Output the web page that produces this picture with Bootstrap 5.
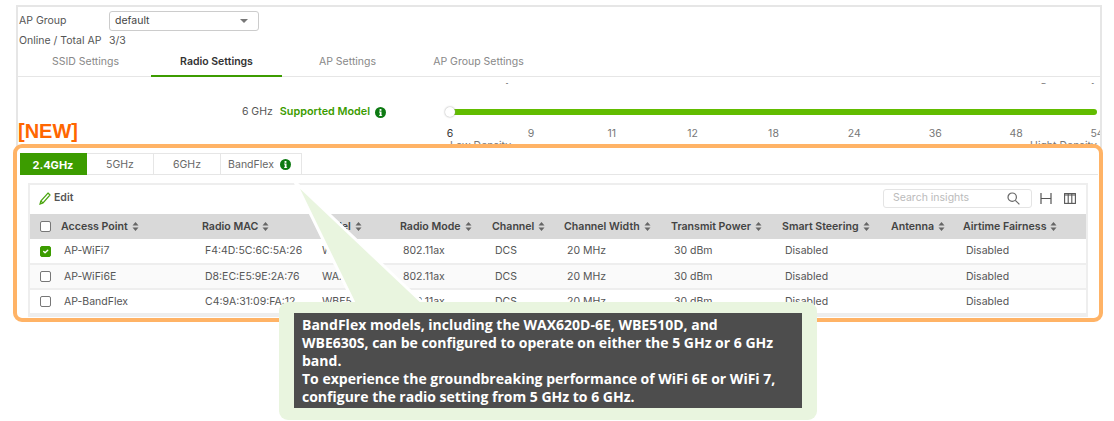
<!DOCTYPE html>
<html lang="en">
<head>
    <meta charset="UTF-8">
    <title>Radio Settings</title>
    <link href="https://cdn.jsdelivr.net/npm/bootstrap@5.3.0/dist/css/bootstrap.min.css" rel="stylesheet">
    <style>
        html, body { height: 421px; overflow: hidden; }
        body { position: relative; background: #fff; font-family: Inter, "Liberation Sans", sans-serif; font-size: 10.5px; color: #555; line-height: 14px; }

        .top-panel { margin: 5px 12px 0 16px; border: solid #e6e6e6; border-width: 2px 2px 0 2px; padding: 4px 0 0 0; overflow: hidden; }
        .info-row { height: 20px; padding-left: 1px; }
        .info-label { width: 90px; flex: none; }
        .fake-select { width: 150px; height: 20px; border: 1px solid #ccc; border-radius: 3px; padding: 0 10px 0 5px; color: #444; }
        .caret { width: 0; height: 0; border: 4px solid transparent; border-top: 4px solid #777; border-bottom: 0; }
        .page-tabs { height: 26px; border-bottom: 1px solid #e6e6e6; padding-left: 2px; }
        .page-tab { width: 131px; color: #888; height: 26px; padding-bottom: 4px; }
        .page-tab.current { color: #333; font-weight: 600; border-bottom: 2px solid #3c9c00; padding-bottom: 2px; }

        .slider-area { margin-top: 6px; }
        .cut-row { height: 3px; overflow: hidden; }
        .density-row { margin-top: -11px; padding-left: 432px; width: 1079px; color: #777; }
        .slide-row { height: 20px; margin-top: 16px; }
        .left-col { width: 432px; flex: none; }
        .right-col { width: 647px; flex: none; }
        .model-col { padding-right: 64px; }
        .supported { color: #3c9c00; font-weight: 600; margin: 0 5px 0 7px; font-size: 10.8px; }
        .track { height: 6px; background: #62bc00; border-radius: 3px; position: relative; }
        .thumb { position: absolute; left: -5px; top: -2px; width: 10px; height: 10px; background: #fff; border-radius: 50%; box-shadow: 0 0 2px #999; }
        .ticks-row { height: 14px; margin-top: 5px; color: #777; }
        .tick { width: 0; white-space: nowrap; }
        .tick.first { color: #333; }
        .new-tag { font-family: "Liberation Sans", sans-serif; font-size: 20px; font-weight: 700; color: #f60; line-height: 20px; margin-top: -6px; }
        .density-low { margin-top: -2px; color: #777; height: 14px; }

        .orange-box { position: relative; margin: -9px 0 0 13px; width: 1090px; height: 178px; border: 4px solid #ffb366; border-radius: 9px; background: #fff; padding: 5px 3px 0 3px; }
        .band-tabs { height: 22px; border-bottom: 1px solid #e6e6e6; width: 1078px; }
        .band-tab { width: 67px; height: 22px; border: solid #e6e6e6; border-width: 1px 1px 0 0; color: #666; }
        .band-tab.current { background: #3c9c00; color: #fff; font-weight: 700; font-size: 11px; border-color: #3c9c00; }
        .band-tab.wide { width: 81px; gap: 6px; border-left-width: 0; padding-right: 3px; }

        .ap-card { margin: 8px 0 0 8px; width: 1060px; border: 2px solid #eee; }
        .card-bar { height: 29px; padding: 0 10px 3px 9px; }
        .edit-link { font-weight: 600; color: #555; gap: 3px; }
        .search-box { width: 149px; height: 19px; border: 1px solid #e4e4e4; border-radius: 3px; padding: 0 11px 0 9px; color: #bbb; margin-right: 8px; }
        .ap-table { table-layout: fixed; width: 1056px; margin: 0; font-size: 10.5px; color: #555; }
        .ap-table > thead > tr > th { height: 25px; padding: 0 0 0 3px; background: #d9d9d9; color: #444; font-weight: 600; font-size: 10.6px; vertical-align: middle; border: 0; white-space: nowrap; }
        .ap-table > tbody > tr > td { height: 25px; padding: 0 0 0 6px; vertical-align: middle; border: 0; border-bottom: 2px solid #eee; white-space: nowrap; overflow: hidden; }
        .ap-table > tbody > tr.alt > td { background: #fafafa; }
        .ap-table > thead > tr > th.box-cell, .ap-table > tbody > tr > td.box-cell { padding: 0 0 0 10px; }
        .ap-table .form-check-input { width: 11px; height: 11px; margin: 0; display: block; border: 1px solid #777; border-radius: 2px; }
        .ap-table .form-check-input:checked { background-color: #3c9c00; border-color: #3c9c00; }
        .sort-mark { margin-left: 4px; vertical-align: -1px; }

        .callout-tail { position: absolute; left: 280px; top: 170px; pointer-events: none; }
        .callout { position: absolute; left: 279px; top: 302px; width: 538px; height: 118px; background: #e9f5df; border-radius: 9px; padding: 11px 15px 12px 15px; }
        .callout-text { height: 95px; background: #4d4d4d; color: #fff; padding: 3px 8px; font-family: "Open Sans", sans-serif; font-weight: 700; font-size: 14px; line-height: 17.9px; }
    </style>
</head>
<body>
    <svg width="0" height="0" class="d-block position-absolute">
        <symbol id="sortMark" viewBox="0 0 7 9"><path d="M3.5 0 6.5 3.5H.5zM3.5 9 .5 5.5h6z" fill="#666"/></symbol>
        <symbol id="infoMark" viewBox="0 0 12 12"><circle cx="6" cy="6" r="6" fill="#0d7a12"/><rect x="5" y="2.2" width="2" height="2" fill="#fff"/><path d="M4.4 5h2.7v3.9h.7v1H4.4v-1h.8V6h-.8z" fill="#fff"/></symbol>
    </svg>

    <div class="top-panel">
        <div class="info-row d-flex align-items-center">
            <div class="info-label">AP Group</div>
            <div class="fake-select d-flex align-items-center justify-content-between">default<span class="caret"></span></div>
        </div>
        <div class="info-row d-flex align-items-center">
            <div class="info-label">Online / Total AP</div>
            <div>3/3</div>
        </div>
        <div class="page-tabs d-flex">
            <div class="page-tab d-flex align-items-center justify-content-center">SSID Settings</div>
            <div class="page-tab current d-flex align-items-center justify-content-center">Radio Settings</div>
            <div class="page-tab d-flex align-items-center justify-content-center">AP Settings</div>
            <div class="page-tab d-flex align-items-center justify-content-center">AP Group Settings</div>
        </div>

        <div class="slider-area">
            <div class="cut-row">
                <div class="density-row d-flex justify-content-between">
                    <span>Low Density</span><span>Hight Density</span>
                </div>
            </div>
            <div class="slide-row d-flex align-items-center">
                <div class="left-col model-col d-flex align-items-center justify-content-end">
                    6 GHz<span class="supported">Supported Model</span>
                    <svg width="11" height="11"><use href="#infoMark"/></svg>
                </div>
                <div class="right-col">
                    <div class="track"><span class="thumb"></span></div>
                </div>
            </div>
            <div class="ticks-row d-flex">
                <div class="left-col"><div class="new-tag">[NEW]</div></div>
                <div class="right-col d-flex justify-content-between">
                    <span class="tick first d-flex justify-content-center">6</span>
                    <span class="tick d-flex justify-content-center">9</span>
                    <span class="tick d-flex justify-content-center">11</span>
                    <span class="tick d-flex justify-content-center">12</span>
                    <span class="tick d-flex justify-content-center">18</span>
                    <span class="tick d-flex justify-content-center">24</span>
                    <span class="tick d-flex justify-content-center">36</span>
                    <span class="tick d-flex justify-content-center">48</span>
                    <span class="tick d-flex justify-content-center">54</span>
                </div>
            </div>
            <div class="density-low d-flex">
                <div class="left-col"></div>
                <div class="right-col d-flex justify-content-between"><span>Low Density</span><span>Hight Density</span></div>
            </div>
        </div>
    </div>

    <div class="orange-box">
        <div class="band-tabs d-flex">
            <div class="band-tab current d-flex align-items-center justify-content-center">2.4GHz</div>
            <div class="band-tab d-flex align-items-center justify-content-center">5GHz</div>
            <div class="band-tab d-flex align-items-center justify-content-center">6GHz</div>
            <div class="band-tab wide d-flex align-items-center justify-content-center">BandFlex
                <svg width="11" height="11"><use href="#infoMark"/></svg>
            </div>
        </div>

        <div class="ap-card">
            <div class="card-bar d-flex align-items-center justify-content-between">
                <div class="edit-link d-flex align-items-center">
                    <svg width="12" height="13" viewBox="0 0 12 13" fill="none" stroke="#4aa50f" stroke-width="1.2"><path d="M9 1 11 3 4 11 1 12 1.8 9zM1.8 9 4 11"/></svg>
                    Edit
                </div>
                <div class="d-flex align-items-center">
                    <div class="search-box d-flex align-items-center justify-content-between">Search insights
                        <svg width="13" height="13" viewBox="0 0 13 13" fill="none" stroke="#666" stroke-width="1.2"><circle cx="5.2" cy="5.2" r="4.2"/><path d="M8.3 8.3 12.4 12.4"/></svg>
                    </div>
                    <svg width="12" height="11" viewBox="0 0 12 11" fill="none" stroke="#555" stroke-width="1.2" class="me-2"><path d="M1 0v11M11 0v11M1 5.5h10"/></svg>
                    <svg width="12" height="11" viewBox="0 0 12 11" fill="none" stroke="#555" stroke-width="1.1" class="ms-1"><rect x=".6" y=".6" width="10.8" height="9.8"/><path d="M4.2.6v9.8M7.8.6v9.8M.6 2h10.8"/></svg>
                </div>
            </div>
            <table class="table ap-table">
                <colgroup>
                    <col style="width:28px"><col style="width:141px"><col style="width:117px"><col style="width:81px"><col style="width:92px"><col style="width:72px"><col style="width:107px"><col style="width:111px"><col style="width:109px"><col style="width:72px"><col style="width:126px">
                </colgroup>
                <thead>
                    <tr>
                        <th class="box-cell"><input class="form-check-input" type="checkbox"></th>
                        <th>Access Point<svg class="sort-mark" width="7" height="9"><use href="#sortMark"/></svg></th>
                        <th>Radio MAC<svg class="sort-mark" width="7" height="9"><use href="#sortMark"/></svg></th>
                        <th>Model<svg class="sort-mark" width="7" height="9"><use href="#sortMark"/></svg></th>
                        <th>Radio Mode<svg class="sort-mark" width="7" height="9"><use href="#sortMark"/></svg></th>
                        <th>Channel<svg class="sort-mark" width="7" height="9"><use href="#sortMark"/></svg></th>
                        <th>Channel Width<svg class="sort-mark" width="7" height="9"><use href="#sortMark"/></svg></th>
                        <th>Transmit Power<svg class="sort-mark" width="7" height="9"><use href="#sortMark"/></svg></th>
                        <th>Smart Steering<svg class="sort-mark" width="7" height="9"><use href="#sortMark"/></svg></th>
                        <th>Antenna<svg class="sort-mark" width="7" height="9"><use href="#sortMark"/></svg></th>
                        <th>Airtime Fairness<svg class="sort-mark" width="7" height="9"><use href="#sortMark"/></svg></th>
                    </tr>
                </thead>
                <tbody>
                    <tr>
                        <td class="box-cell"><input class="form-check-input" type="checkbox" checked></td>
                        <td>AP-WiFi7</td><td>F4:4D:5C:6C:5A:26</td><td>WBE710</td><td>802.11ax</td><td>DCS</td><td>20 MHz</td><td>30 dBm</td><td>Disabled</td><td></td><td>Disabled</td>
                    </tr>
                    <tr class="alt">
                        <td class="box-cell"><input class="form-check-input" type="checkbox"></td>
                        <td>AP-WiFi6E</td><td>D8:EC:E5:9E:2A:76</td><td>WAX620D-6E</td><td>802.11ax</td><td>DCS</td><td>20 MHz</td><td>30 dBm</td><td>Disabled</td><td></td><td>Disabled</td>
                    </tr>
                    <tr>
                        <td class="box-cell"><input class="form-check-input" type="checkbox"></td>
                        <td>AP-BandFlex</td><td>C4:9A:31:09:FA:12</td><td>WBE510D</td><td>802.11ax</td><td>DCS</td><td>20 MHz</td><td>30 dBm</td><td>Disabled</td><td></td><td>Disabled</td>
                    </tr>
                </tbody>
            </table>
        </div>
    </div>

    <svg class="callout-tail" width="160" height="140" viewBox="0 0 160 140">
        <path d="M15 12 75 135H145Z" fill="#e9f5df" stroke="#fff" stroke-width="3"/>
    </svg>
    <div class="callout">
        <div class="callout-text">BandFlex models, including the WAX620D-6E, WBE510D, and<br>WBE630S, can be configured to operate on either the 5 GHz or 6 GHz<br>band.<br>To experience the groundbreaking performance of WiFi 6E or WiFi 7,<br>configure the radio setting from 5 GHz to 6 GHz.</div>
    </div>

    <script src="https://cdn.jsdelivr.net/npm/bootstrap@5.3.0/dist/js/bootstrap.bundle.min.js"></script>
</body>
</html>
